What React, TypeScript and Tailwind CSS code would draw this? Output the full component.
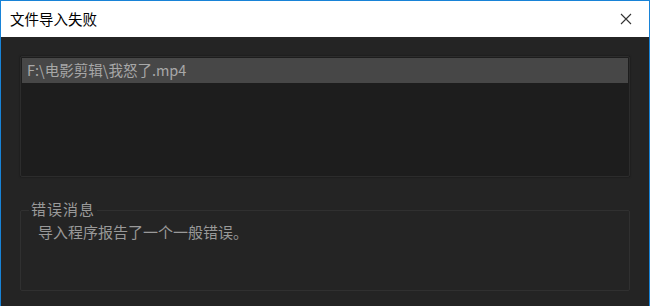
import React from "react";

export default function App() {
  const font = { fontFamily: '"Microsoft YaHei", "Noto Sans CJK SC", "Noto Sans", sans-serif' };
  return (
    <div className="w-[650px] h-[306px] border border-b-0 border-[#1883d7] bg-[#242424] flex flex-col overflow-hidden" style={font}>
      <div className="h-[36px] bg-white flex items-center justify-between pl-[9px] pr-[17px] shrink-0">
        <span className="text-[14.5px] text-black leading-none">文件导入失败</span>
        <svg width="12" height="12" viewBox="0 0 12 12" className="block">
          <path d="M1 1 L11 11 M11 1 L1 11" stroke="#333" strokeWidth="1.1" fill="none" />
        </svg>
      </div>
      <div className="flex-1 flex flex-col px-[19px] pt-[19px]">
        <div className="h-[121px] bg-[#1d1d1d] border border-[#2c2c2c] rounded-[2px] p-[1px] shadow-[0_0_2px_rgba(0,0,0,0.5)]">
          <div className="h-[25px] bg-[#474747] flex items-center pl-[5px] text-[14.5px] text-[#a8a8a8] leading-none">
            F:\电影剪辑\我怒了.mp4
          </div>
        </div>
        <div className="relative mt-[33px] h-[81px] border border-[#303030] rounded-[2px]">
          <span className="absolute left-[8px] top-[-12px] bg-[#242424] px-[2px] text-[15px] leading-[20px] text-[#9a9a9a] tracking-[1px]">错误消息</span>
          <div className="pt-[11px] pl-[17px] text-[15px] leading-[20px] text-[#999999]">导入程序报告了一个一般错误。</div>
        </div>
      </div>
    </div>
  );
}
